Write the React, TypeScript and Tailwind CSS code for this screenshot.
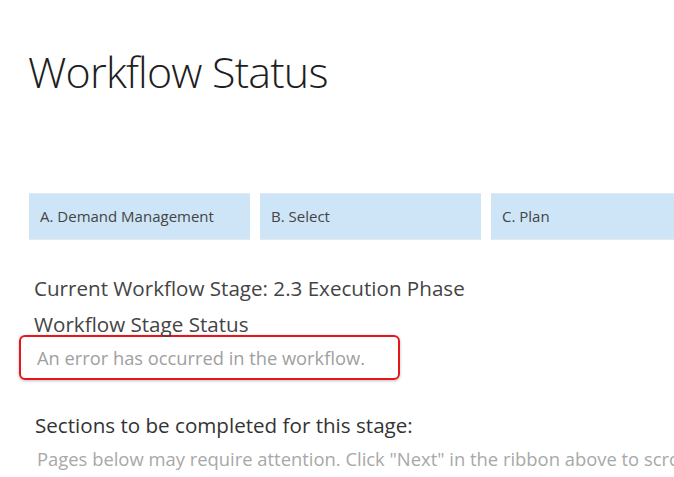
export default function App() {
  const font = { fontFamily: '"Open Sans", "Noto Sans", sans-serif' };
  return (
    <div className="w-[674px] h-[477px] overflow-hidden bg-white relative" style={font}>
      <h1 className="pl-[28px] pt-[44px] text-[43px] leading-[56px] font-light text-[#1e1e1e] tracking-[-0.8px]">
        Workflow Status
      </h1>
      <div className="mt-[93px] ml-[29px] flex gap-[10px] w-[700px]">
        <div className="w-[221px] h-[47px] bg-[#cde5f7] border-y border-[#e2e8ee] flex items-center pl-[11px] text-[15px] text-[#444] whitespace-nowrap">
          A. Demand Management
        </div>
        <div className="w-[221px] h-[47px] bg-[#cde5f7] border-y border-[#e2e8ee] flex items-center pl-[11px] text-[15px] text-[#444] whitespace-nowrap">
          B. Select
        </div>
        <div className="w-[221px] h-[47px] bg-[#cde5f7] border-y border-[#e2e8ee] flex items-center pl-[11px] text-[15px] text-[#444] whitespace-nowrap">
          C. Plan
        </div>
      </div>
      <div className="pl-[34px] mt-[30px] text-[20.6px] leading-[36px] text-[#444] whitespace-nowrap">
        <div>Current Workflow Stage: 2.3 Execution Phase</div>
        <div>Workflow Stage Status</div>
      </div>
      <div className="ml-[19px] mt-[-7px] w-[381px] h-[45px] border-2 border-[#e8141c] rounded-[6px] shadow-[0_1px_3px_rgba(0,0,0,0.25)] flex items-center pl-[16px] text-[18.3px] text-[#a0a0a0] whitespace-nowrap">
        An error has occurred in the workflow.
      </div>
      <div className="pl-[35px] mt-[30px] text-[20.6px] leading-[30px] text-[#333] whitespace-nowrap">
        Sections to be completed for this stage:
      </div>
      <div className="pl-[37px] mt-[6px] text-[18.4px] leading-[26px] text-[#a8a8a8] whitespace-nowrap">
        Pages below may require attention. Click "Next" in the ribbon above to scroll through them.
      </div>
    </div>
  );
}
